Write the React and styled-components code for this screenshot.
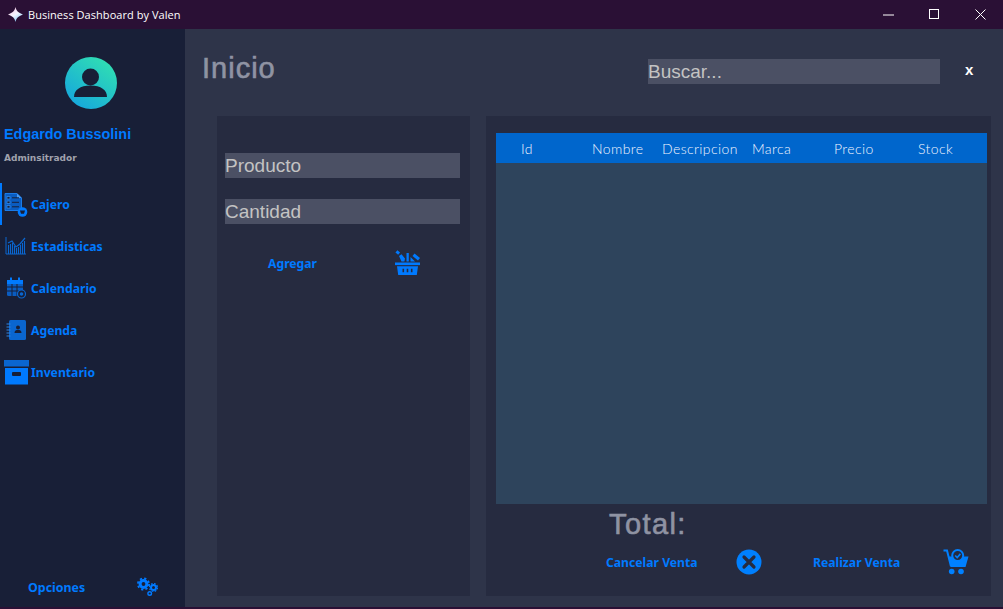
import React from "react";
import styled, { createGlobalStyle } from "styled-components";

const blue = "#007aff";

const GlobalStyle = createGlobalStyle`
  html, body {
    margin: 0;
    padding: 0;
    background: #2e3449;
    overflow: hidden;
  }
`;

const CajeroIcon = () => (
  <svg width="27" height="25" viewBox="0 0 27 25" fill="none">
    <path d="M1 1.500h12l4.500 4.500v12.500H1z" fill="#0a5cc0" stroke="#1a7be8" />
    <path d="M13 1.500V6h4.500" fill="#4b9df5" />
    <g fill="#181f37" stroke="#2f86e6" strokeWidth="0.8">
      <rect x="3" y="4.500" width="3" height="2.600" />
      <rect x="3" y="9" width="3" height="2.600" />
      <rect x="3" y="13.500" width="3" height="2.600" />
    </g>
    <path d="M8 5.800h7M8 10.300h7M8 14.800h7" stroke="#181f37" />
    <circle cx="18.500" cy="20" r="4.800" fill={blue} />
    <path d="M16 18.500h5l-1 3.300h-3z" fill="#181f37" />
  </svg>
);

const EstadisticasIcon = () => (
  <svg width="22" height="20" viewBox="0 0 22 20" fill="none">
    <path d="M1 1v17h20" stroke="#0a66d0" />
    <path d="M3 7l4-2 4 6 4-3 5-6" stroke="#0a66d0" strokeWidth="1.200" />
    <path
      d="M3.500 9v9M5.500 8v10M7.500 7v11M9.500 10v8M11.500 12v6M13.500 11v7M15.500 9v9M17.500 7v11M19.500 5v13"
      stroke="#0a66d0"
      strokeWidth="1.100"
    />
  </svg>
);

const CalendarioIcon = () => (
  <svg width="21" height="22" viewBox="0 0 21 22" fill="none">
    <rect x="1" y="3" width="16" height="16" rx="1.500" fill="#0a5cc0" />
    <rect x="1" y="3" width="16" height="4" fill={blue} />
    <rect x="4" y="0.500" width="2" height="5" fill={blue} />
    <rect x="12" y="0.500" width="2" height="5" fill={blue} />
    <path d="M1 10h16M1 14h16M6 7v12M11 7v12" stroke="#181f37" />
    <circle cx="15.500" cy="17" r="4" fill="#181f37" stroke="#0a66d0" strokeWidth="1.200" />
    <circle cx="15.500" cy="17" r="1.800" fill="#0a66d0" />
  </svg>
);

const AgendaIcon = () => (
  <svg width="21" height="22" viewBox="0 0 21 22" fill="none">
    <rect x="3" y="1" width="17" height="20" rx="1.500" fill="#0a66d0" />
    <path d="M0.500 5h4M0.500 8h4M0.500 11h4M0.500 14h4M0.500 17h4" stroke="#2f86e6" />
    <circle cx="12" cy="8.500" r="2" fill="#181f37" />
    <path d="M8.500 14c0-2.500 1.500-3 3.500-3s3.500.5 3.500 3z" fill="#181f37" />
  </svg>
);

const InventarioIcon = () => (
  <svg width="25" height="25" viewBox="0 0 25 25" fill="none">
    <rect x="0" y="0" width="25" height="6.500" fill="#0a66d0" />
    <rect x="1" y="8" width="23" height="16.500" fill={blue} />
    <rect x="8" y="12" width="9" height="4" rx="1" fill="#181f37" />
  </svg>
);

const OpcionesIcon = () => (
  <svg width="22" height="20" viewBox="0 0 22 20" fill="none">
    <circle cx="6.500" cy="7" r="3.400" stroke={blue} strokeWidth="3" />
    <circle cx="6.500" cy="7" r="5.600" stroke={blue} strokeWidth="1.800" strokeDasharray="2.200 2.200" />
    <circle cx="16.500" cy="10.500" r="2.500" stroke={blue} strokeWidth="2" />
    <circle cx="16.500" cy="10.500" r="4" stroke={blue} strokeWidth="1.200" strokeDasharray="1.700 1.450" />
    <circle cx="12.700" cy="16.500" r="1.800" stroke={blue} strokeWidth="1.400" />
  </svg>
);

const BasketIcon = () => (
  <svg width="26" height="26" viewBox="0 0 26 26" fill={blue}>
    <rect x="1" y="1" width="3.500" height="3" transform="rotate(40 2.750 2.500)" />
    <path d="M4 6l2.500-1.800 3.500 4.300-.6 3H6.500z" />
    <path d="M11.500 3h2.300v8.500h-2.300z" />
    <path d="M15.500 11.500V7l4.500 4.500z" />
    <path d="M19.500 3.500l5.500 4.500-2 2.400-5.500-4.500z" />
    <rect x="0" y="12.500" width="25" height="2.600" />
    <path
      d="M2 16.300h21l-1.200 8.700H3.200zM7.500 18.800v3.500h1.600v-3.500zM11.700 18.800v3.500h1.600v-3.500zM15.900 18.800v3.500h1.600v-3.500z"
      fillRule="evenodd"
    />
  </svg>
);

const CancelIcon = () => (
  <svg width="26" height="26" viewBox="0 0 26 26">
    <circle cx="13" cy="13" r="12.500" fill="#0080ff" />
    <path d="M8 8l10 10M18 8L8 18" stroke="#262b40" strokeWidth="3.200" strokeLinecap="round" />
  </svg>
);

const CartIcon = () => (
  <svg width="26" height="26" viewBox="0 0 26 26" fill="none">
    <path d="M0.500 1.500h3.500l4 16" stroke="#0080ff" strokeWidth="2" />
    <path d="M5 7.500h20.500l-3 10.500H8z" fill="#0080ff" />
    <circle cx="8.700" cy="22.500" r="2.800" fill="#0080ff" />
    <circle cx="18" cy="22.500" r="2.800" fill="#0080ff" />
    <circle cx="14.700" cy="6.500" r="5.500" fill="#262b40" stroke="#0080ff" strokeWidth="2" />
    <path d="M12.200 6.500l2 2 3.200-3.600" stroke="#0080ff" strokeWidth="1.600" />
  </svg>
);

const menu = [
  { label: "Cajero", icon: <CajeroIcon />, inset: 2, active: true },
  { label: "Estadisticas", icon: <EstadisticasIcon />, inset: 3 },
  { label: "Calendario", icon: <CalendarioIcon />, inset: 4 },
  { label: "Agenda", icon: <AgendaIcon />, inset: 4 },
  { label: "Inventario", icon: <InventarioIcon />, inset: 2 },
];

const columns = [
  { label: "Id", width: 71 },
  { label: "Nombre", width: 70 },
  { label: "Descripcion", width: 90 },
  { label: "Marca", width: 82 },
  { label: "Precio", width: 84 },
  { label: "Stock", width: 60 },
];

const App = () => {
  return (
    <>
      <GlobalStyle />
      <Window>
        <TitleBar>
          <AppTitle>
            <svg width="15" height="15" viewBox="0 0 15 15">
              <defs>
                <linearGradient id="star" x1="0.2" y1="0" x2="0.8" y2="1">
                  <stop offset="0" stopColor="#f6c6e6" />
                  <stop offset="0.5" stopColor="#f4f6ff" />
                  <stop offset="1" stopColor="#6fc0f5" />
                </linearGradient>
              </defs>
              <path
                d="M7.500 0C8.300 3.500 10 5.800 15 7.500 10 9.200 8.300 11.500 7.500 15 6.700 11.500 5 9.200 0 7.500 5 5.800 6.700 3.500 7.500 0z"
                fill="url(#star)"
              />
            </svg>
            <span>Business Dashboard by Valen</span>
          </AppTitle>
          <WindowButtons>
            <WindowButton>
              <svg width="11" height="11" viewBox="0 0 11 11">
                <path d="M0 6h11" stroke="#fff" />
              </svg>
            </WindowButton>
            <WindowButton>
              <svg width="11" height="11" viewBox="0 0 11 11" fill="none">
                <rect x="0.500" y="0.500" width="9" height="9" stroke="#fff" />
              </svg>
            </WindowButton>
            <WindowButton>
              <svg width="11" height="11" viewBox="0 0 11 11">
                <path d="M0.500 0.500l10 10M10.500 0.500l-10 10" stroke="#fff" />
              </svg>
            </WindowButton>
          </WindowButtons>
        </TitleBar>
        <Body>
          <Sidebar>
            <Avatar>
              <svg width="52" height="52" viewBox="0 0 52 52">
                <defs>
                  <linearGradient id="avatar" x1="0.8" y1="0.1" x2="0.2" y2="0.9">
                    <stop offset="0" stopColor="#2fdcb4" />
                    <stop offset="1" stopColor="#17aadb" />
                  </linearGradient>
                </defs>
                <circle cx="26" cy="26" r="26" fill="url(#avatar)" />
                <circle cx="25.500" cy="20" r="8.500" fill="#181f37" />
                <path d="M9 40c0-7 6-11.500 16.500-11.500S42 33 42 40z" fill="#181f37" />
              </svg>
            </Avatar>
            <UserName>Edgardo Bussolini</UserName>
            <UserRole>Adminsitrador</UserRole>
            <Menu>
              {menu.map((item) => (
                <MenuItem key={item.label} $active={item.active}>
                  <MenuIcon $inset={item.inset}>{item.icon}</MenuIcon>
                  {item.label}
                </MenuItem>
              ))}
            </Menu>
            <OptionsRow>
              <span>Opciones</span>
              <OpcionesIcon />
            </OptionsRow>
          </Sidebar>
          <Main>
            <Header>
              <PageTitle>Inicio</PageTitle>
              <SearchBox>Buscar...</SearchBox>
              <ClearButton>x</ClearButton>
            </Header>
            <Panels>
              <LeftPanel>
                <Field>Producto</Field>
                <Field>Cantidad</Field>
                <AddRow>
                  <BoldLabel>Agregar</BoldLabel>
                  <BasketIcon />
                </AddRow>
              </LeftPanel>
              <RightPanel>
                <Table>
                  <TableHead>
                    {columns.map((col) => (
                      <HeadCell key={col.label} $width={col.width}>
                        {col.label}
                      </HeadCell>
                    ))}
                  </TableHead>
                </Table>
                <TotalLabel>Total:</TotalLabel>
                <Actions>
                  <ActionGroup>
                    <BoldLabel>Cancelar Venta</BoldLabel>
                    <CancelIcon />
                  </ActionGroup>
                  <ActionGroup>
                    <BoldLabel>Realizar Venta</BoldLabel>
                    <CartIcon />
                  </ActionGroup>
                </Actions>
              </RightPanel>
            </Panels>
          </Main>
        </Body>
      </Window>
    </>
  );
};

export default App;

const Window = styled.div`
  width: 1003px;
  height: 609px;
  display: flex;
  flex-direction: column;
  background: #2e3449;
  border-bottom: 2px solid #2a1035;
  box-sizing: border-box;
  overflow: hidden;
`;

const TitleBar = styled.div`
  height: 29px;
  flex: none;
  display: flex;
  align-items: center;
  justify-content: space-between;
  background: #2a1035;
  color: #fff;
`;

const AppTitle = styled.div`
  display: flex;
  align-items: center;
  gap: 5px;
  padding-left: 8px;
  font-family: "Open Sans", "Noto Sans", sans-serif;
  font-size: 11px;
  letter-spacing: 0.05px;
`;

const WindowButtons = styled.div`
  display: flex;
`;

const WindowButton = styled.div`
  width: 46px;
  height: 29px;
  display: flex;
  align-items: center;
  justify-content: center;
`;

const Body = styled.div`
  flex: 1;
  display: flex;
  min-height: 0;
`;

const Sidebar = styled.div`
  width: 185px;
  flex: none;
  display: flex;
  flex-direction: column;
  background: #181f37;
`;

const Avatar = styled.div`
  display: flex;
  justify-content: center;
  padding: 28px 4px 0 0;
  height: 52px;
`;

const UserName = styled.div`
  margin: 17px 0 0 4px;
  font-family: "Liberation Sans", Arial, sans-serif;
  font-size: 14.4px;
  font-weight: 700;
  line-height: 17px;
  color: ${blue};
`;

const UserRole = styled.div`
  margin: 9px 0 0 4px;
  font-family: "DejaVu Sans", sans-serif;
  font-size: 9px;
  font-weight: 700;
  line-height: 12px;
  color: #a0a2ad;
`;

const Menu = styled.div`
  margin-top: 19px;
  display: flex;
  flex-direction: column;
  flex: 1;
`;

const MenuItem = styled.div`
  height: 42px;
  display: flex;
  align-items: center;
  font-family: "Noto Sans", sans-serif;
  font-size: 12.2px;
  font-weight: 700;
  color: ${blue};
  border-left: 2px solid ${(props) => (props.$active ? blue : "transparent")};
`;

const MenuIcon = styled.div`
  width: 29px;
  flex: none;
  display: flex;
  align-items: center;
  padding-left: ${(props) => props.$inset}px;
  box-sizing: border-box;
`;

const OptionsRow = styled.div`
  height: 40px;
  display: flex;
  align-items: center;
  justify-content: space-between;
  padding: 0 26px 0 28px;
  font-family: "Noto Sans", sans-serif;
  font-size: 12.4px;
  font-weight: 700;
  color: ${blue};
`;

const Main = styled.div`
  flex: 1;
  display: flex;
  flex-direction: column;
  min-width: 0;
`;

const Header = styled.div`
  height: 87px;
  flex: none;
  display: flex;
  align-items: flex-start;
`;

const PageTitle = styled.h1`
  margin: 22px 0 0 17px;
  width: 446px;
  font-family: "Liberation Sans", Arial, sans-serif;
  font-size: 29px;
  font-weight: 400;
  line-height: 35px;
  letter-spacing: 1px;
  -webkit-text-stroke: 0.6px #8f93a3;
  color: #8f93a3;
`;

const SearchBox = styled.div`
  margin-top: 30px;
  width: 292px;
  height: 25px;
  background: #4b5064;
  font-family: "Liberation Sans", Arial, sans-serif;
  font-size: 19px;
  line-height: 25px;
  color: #c3c3c3;
`;

const ClearButton = styled.div`
  margin: 33px 0 0 25px;
  font-family: "Liberation Sans", Arial, sans-serif;
  font-size: 15px;
  font-weight: 700;
  line-height: 16px;
  color: #fff;
`;

const Panels = styled.div`
  flex: 1;
  display: flex;
  gap: 16px;
  padding: 0 12px 11px 32px;
  min-height: 0;
`;

const LeftPanel = styled.div`
  width: 253px;
  flex: none;
  display: flex;
  flex-direction: column;
  gap: 21px;
  padding: 37px 10px 0 8px;
  box-sizing: border-box;
  background: #262b40;
`;

const Field = styled.div`
  height: 25px;
  background: #4b5064;
  font-family: "Liberation Sans", Arial, sans-serif;
  font-size: 19px;
  line-height: 25px;
  color: #c3c3c3;
`;

const AddRow = styled.div`
  display: flex;
  align-items: center;
  gap: 78px;
  padding: 5px 0 0 43px;
`;

const BoldLabel = styled.span`
  font-family: "Noto Sans", sans-serif;
  font-size: 12.2px;
  font-weight: 700;
  color: ${blue};
`;

const RightPanel = styled.div`
  flex: 1;
  display: flex;
  flex-direction: column;
  padding: 17px 4px 0 10px;
  background: #262b40;
`;

const Table = styled.div`
  height: 371px;
  flex: none;
  background: #2e445c;
`;

const TableHead = styled.div`
  height: 30px;
  display: flex;
  align-items: center;
  padding-left: 25px;
  background: #0066cc;
`;

const HeadCell = styled.div`
  width: ${(props) => props.$width}px;
  flex: none;
  font-family: "Lato", sans-serif;
  font-size: 14px;
  font-weight: 300;
  letter-spacing: 0.4px;
  color: #f0f4ff;
`;

const TotalLabel = styled.div`
  margin: 4px 0 0 113px;
  font-family: "Liberation Sans", Arial, sans-serif;
  font-size: 29px;
  line-height: 32px;
  letter-spacing: 1.4px;
  -webkit-text-stroke: 0.6px #8f93a3;
  color: #8f93a3;
`;

const Actions = styled.div`
  margin-top: 9px;
  padding-left: 110px;
  display: flex;
  gap: 51px;
`;

const ActionGroup = styled.div`
  width: 156px;
  display: flex;
  align-items: center;
  justify-content: space-between;
`;
